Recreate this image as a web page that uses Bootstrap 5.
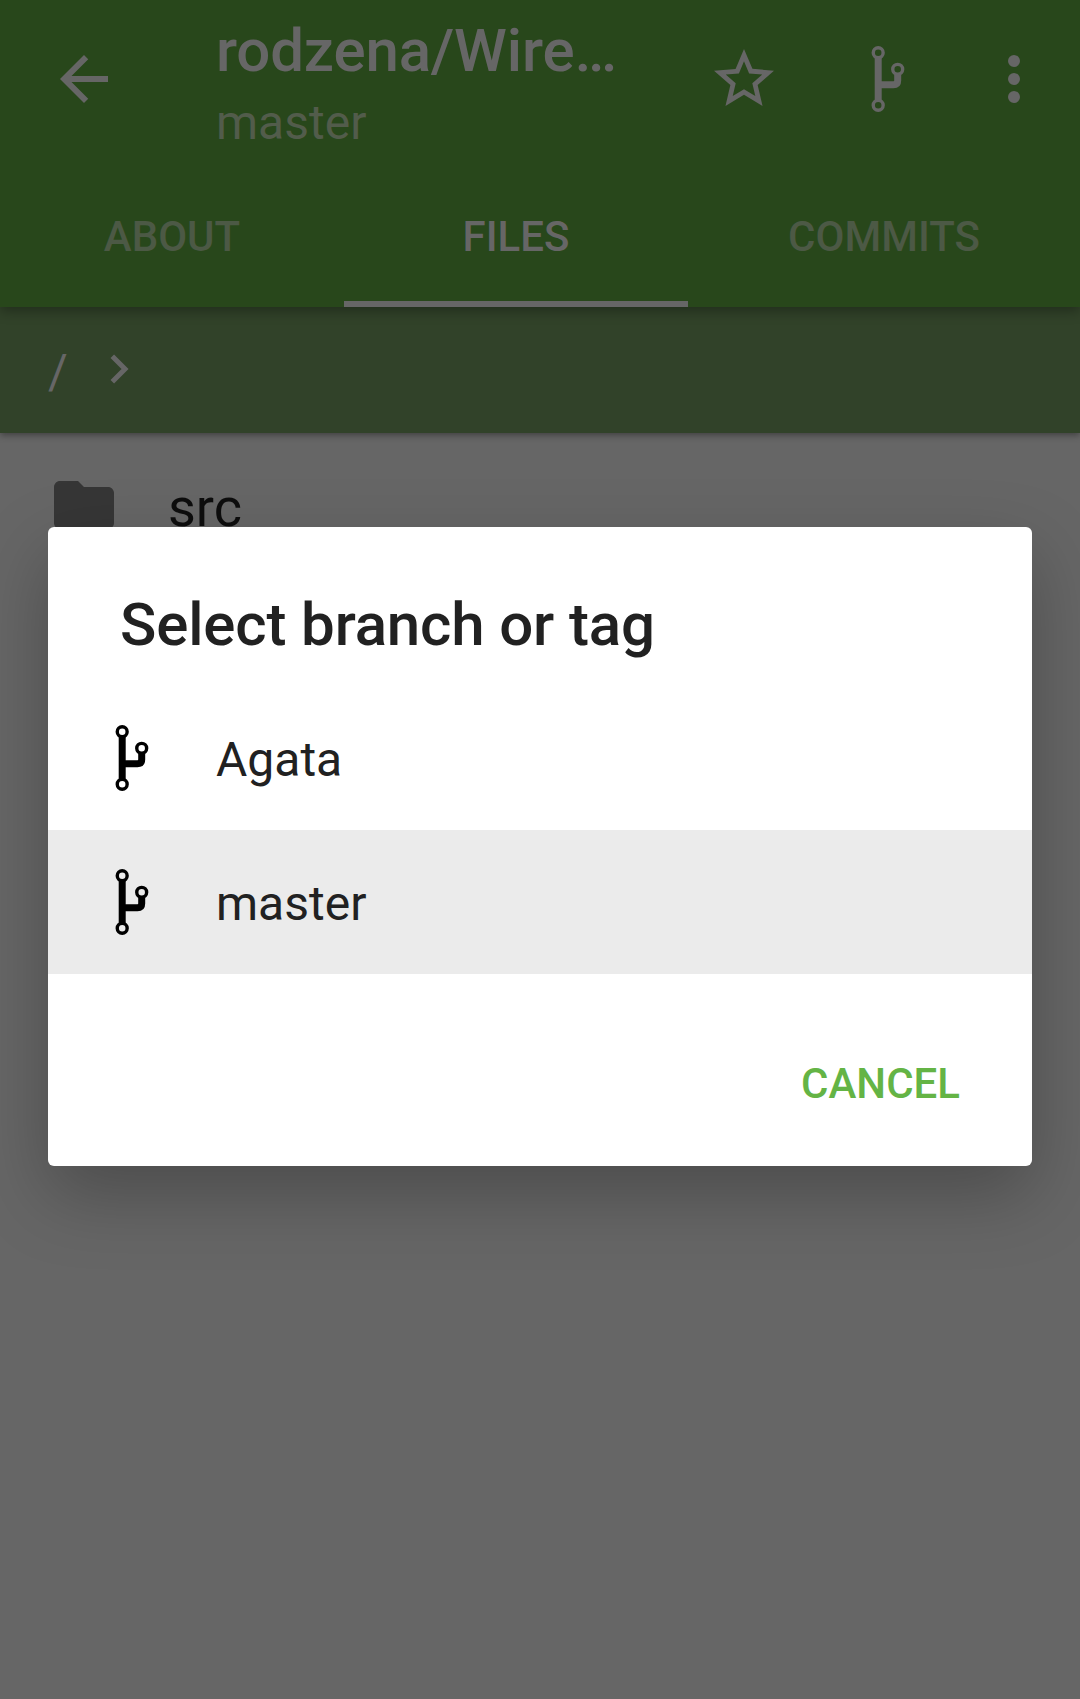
<!DOCTYPE html>
<html lang="en">
<head>
<meta charset="utf-8">
<meta name="viewport" content="width=device-width, initial-scale=1">
<title>Select branch or tag</title>
<link href="https://cdn.jsdelivr.net/npm/bootstrap@5.3.0/dist/css/bootstrap.min.css" rel="stylesheet">
<style>
  body { font-family: Roboto, sans-serif; background: #666; color: #0d0d0d; height: 1699px; overflow: hidden; }
  .ico { width: 72px; height: 72px; flex: none; display: block; fill: currentColor; }
  .app-head { background: #28471b; color: #666; z-index: 3; box-shadow: 0 4px 12px rgba(0,0,0,.32); }
  .app-bar { height: 163px; padding: 0 30px 0 48px; }
  .bar-icon { margin-top: 43px; }
  .bar-titles { margin-left: 96px; padding-top: 11px; }
  .bar-title { font-size: 60px; font-weight: 500; line-height: 79px; white-space: nowrap; letter-spacing: -.15px; }
  .bar-sub { font-size: 48px; line-height: 66px; color: #525c4b; }
  .bar-actions { gap: 72px; }
  .bar-actions .more { margin-left: -18px; }
  .tab-row { height: 144px; }
  .tab-row .nav-link { width: 344px; padding: 3px 0 0; border-radius: 0; line-height: 141px; height: 144px; font-size: 42px; font-weight: 500; color: #4c5945; text-align: center; }
  .tab-row .nav-link.active { color: #666; box-shadow: inset 0 -6px #666; }
  .tab-row .nav-link.wide { width: 392px; }
  .crumbs { height: 126px; background: #314229; color: #666; z-index: 2; padding-left: 48px; box-shadow: 0 2px 7px rgba(0,0,0,.4); }
  .crumbs span { font-size: 48px; line-height: 66px; padding-top: 3px; }
  .crumbs svg { width: 20px; height: 30px; margin: 0 0 3px 42px; fill: none; stroke: currentColor; stroke-width: 5; }
  .file-row { height: 144px; padding-left: 48px; font-size: 54px; }
  .file-row .ico { color: #363636; }
  .file-row span { margin-left: 48px; padding-top: 5px; line-height: 72px; }
  .picker { top: 527px; left: 48px; width: 984px; height: 639px; z-index: 5; border-radius: 6px; color: #212121; box-shadow: 0 28px 72px rgba(0,0,0,.26); }
  .picker-title { font-size: 60px; font-weight: 500; line-height: 80px; height: 159px; padding: 58px 72px 0; margin: 0; letter-spacing: -.15px; }
  .branch { height: 144px; padding: 0 48px; border: 0; border-radius: 0; font-size: 48px; line-height: 66px; color: #212121; background: none; }
  .branch.current { background: #ebebeb; }
  .branch .ico { color: #000; }
  .branch span { margin-left: 48px; padding-top: 3px; }
  .btn-cancel { font-size: 42px; font-weight: 500; line-height: 60px; color: #64b445; padding: 0; margin: 80px 72px 0 0; border: 0; }
</style>
<script src="https://cdn.jsdelivr.net/npm/bootstrap@5.3.0/dist/js/bootstrap.bundle.min.js"></script>
</head>
<body class="position-relative">
<svg class="d-none" aria-hidden="true">
  <symbol id="branch" viewBox="0 0 72 72">
    <g fill="none" stroke="currentColor">
      <g stroke-width="3.4"><circle cx="26.2" cy="9.7" r="4.95"/><circle cx="26.2" cy="62.3" r="4.95"/><circle cx="45.7" cy="26.3" r="4.95"/></g>
      <path stroke-width="7" d="M26.2 15V57M26.2 41.7H41.5Q45.7 41.7 45.7 37.5V31.5"/>
    </g>
  </symbol>
</svg>

<header class="app-head position-relative">
  <div class="app-bar d-flex align-items-start">
    <svg class="ico bar-icon" viewBox="0 0 24 24"><path d="M20 11H7.83l5.59-5.59L12 4l-8 8 8 8 1.41-1.41L7.83 13H20v-2z"/></svg>
    <div class="bar-titles">
      <div class="bar-title">rodzena/Wire…</div>
      <div class="bar-sub">master</div>
    </div>
    <div class="bar-actions bar-icon d-flex ms-auto">
      <svg class="ico" viewBox="0 0 24 24"><path d="M22 9.24l-7.19-.62L12 2 9.19 8.63 2 9.24l5.46 4.73L5.82 21 12 17.27 18.18 21l-1.63-7.03L22 9.24zM12 15.4l-3.76 2.27 1-4.28-3.32-2.88 4.38-.38L12 6.1l1.71 4.04 4.38.38-3.32 2.88 1 4.28L12 15.4z"/></svg>
      <svg class="ico"><use href="#branch"/></svg>
      <svg class="ico more" viewBox="0 0 24 24"><circle cx="12" cy="6" r="2"/><circle cx="12" cy="12" r="2"/><circle cx="12" cy="18" r="2"/></svg>
    </div>
  </div>
  <nav class="nav tab-row flex-nowrap">
    <a class="nav-link">ABOUT</a>
    <a class="nav-link active">FILES</a>
    <a class="nav-link wide">COMMITS</a>
  </nav>
</header>

<div class="crumbs position-relative d-flex align-items-center">
  <span>/</span>
  <svg viewBox="0 0 20 30"><path d="M2.3 2.3L15 15 2.3 27.7"/></svg>
</div>

<main>
  <div class="file-row d-flex align-items-center">
    <svg class="ico" viewBox="0 0 24 24"><path d="M10 4H4c-1.1 0-1.99.9-1.99 2L2 18c0 1.1.9 2 2 2h16c1.1 0 2-.9 2-2V8c0-1.1-.9-2-2-2h-8l-2-2z"/></svg>
    <span>src</span>
  </div>
</main>

<section class="picker position-absolute bg-white d-flex flex-column" role="dialog">
  <h1 class="picker-title">Select branch or tag</h1>
  <div class="list-group rounded-0">
    <div class="list-group-item branch d-flex align-items-center"><svg class="ico"><use href="#branch"/></svg><span>Agata</span></div>
    <div class="list-group-item branch current d-flex align-items-center"><svg class="ico"><use href="#branch"/></svg><span>master</span></div>
  </div>
  <button class="btn btn-cancel align-self-end" type="button">CANCEL</button>
</section>
</body>
</html>
